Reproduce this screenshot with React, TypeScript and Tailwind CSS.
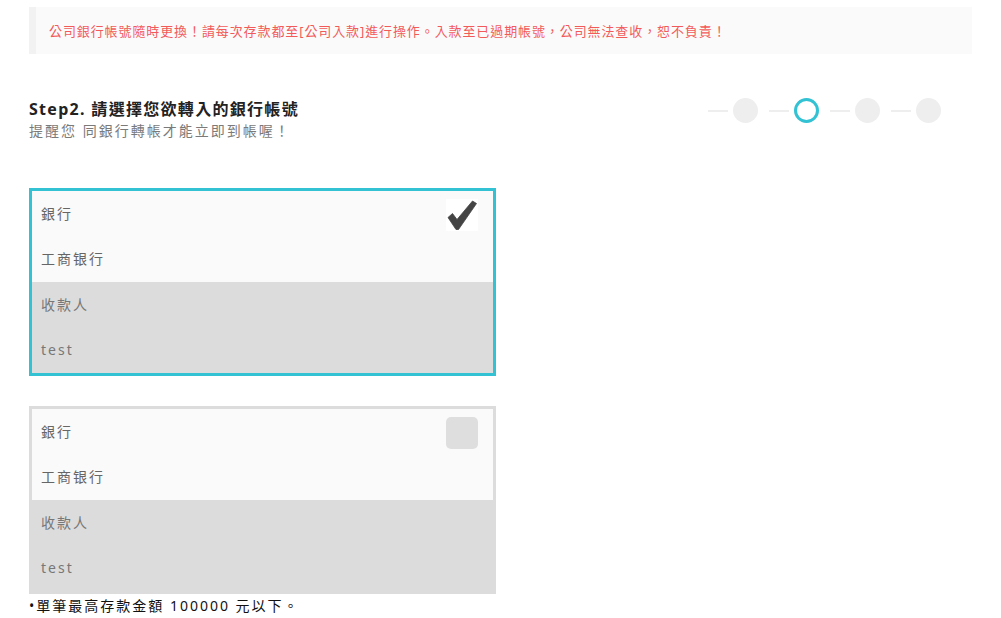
const font = { fontFamily: '"Noto Sans", "Noto Sans CJK TC", sans-serif' }

const accounts = [
  { bank: '工商银行', payee: 'test', selected: true },
  { bank: '工商银行', payee: 'test', selected: false },
]

function CheckIcon() {
  return (
    <svg width="32" height="32" viewBox="0 0 32 32" className="block">
      <path
        d="M2 18.5 L6.5 14.5 L11 20.5 L26.5 2 L30.5 4.5 L12.5 30.5 L10 30.5 Z"
        fill="#444444"
        stroke="#444444"
        strokeWidth="0.8"
        strokeLinejoin="round"
      />
    </svg>
  )
}

function Steps() {
  const steps = [false, true, false, false]
  return (
    <div className="flex items-center pr-[31px] -mt-[1px] -mb-[4px]">
      {steps.map((active, i) => (
        <div key={i} className="flex items-center ml-[11px] first:ml-0">
          <div className="w-5 h-[2px] bg-[#eeeeee]" />
          <div
            className={`ml-[5px] w-[25px] h-[25px] rounded-full ${
              active ? 'border-[3px] border-[#33c1d4] bg-white' : 'bg-[#eeeeee]'
            }`}
          />
        </div>
      ))}
    </div>
  )
}

function AccountCard({ bank, payee, selected }: { bank: string; payee: string; selected: boolean }) {
  return (
    <div
      className={`w-[467px] border-[3px] ${selected ? 'border-[#33c1d4]' : 'border-[#dcdcdc]'}`}
    >
      <div className="bg-[#fafafa]">
        <div className="h-[45.5px] flex items-center justify-between pl-[9px] pr-[15px]">
          <span className="text-[14px] leading-5 tracking-[2px] text-[#666666]">銀行</span>
          {selected ? (
            <div className="mt-[2px] w-8 h-8 bg-white">
              <CheckIcon />
            </div>
          ) : (
            <div className="mt-[2px] w-8 h-8 rounded-[5px] bg-[#dedede]" />
          )}
        </div>
        <div className="h-[45.5px] flex items-center pl-[9px]">
          <span className="text-[14px] leading-5 tracking-[2px] text-[#666666]">{bank}</span>
        </div>
      </div>
      <div className="bg-[#dcdcdc]">
        <div className="h-[45.5px] flex items-center pl-[9px]">
          <span className="text-[14px] leading-5 tracking-[2px] text-[#777777]">收款人</span>
        </div>
        <div className="h-[45.5px] flex items-center pl-[9px]">
          <span className="text-[14px] leading-5 tracking-[2px] text-[#777777]">{payee}</span>
        </div>
      </div>
    </div>
  )
}

export default function App() {
  return (
    <div className="min-h-screen bg-white pl-[29px] pr-[29px] pt-[7px]" style={font}>
      <div className="h-[47px] bg-[#fafafa] border-l-[7px] border-[#f2f2f2] flex items-center pl-[13px]">
        <p className="text-[13px] leading-5 tracking-[0.9px] text-[#f25a5a]">
          公司銀行帳號隨時更換！請每次存款都至[公司入款]進行操作。入款至已過期帳號，公司無法查收，恕不負責！
        </p>
      </div>

      <div className="mt-[45px] flex items-start justify-between">
        <h2 className="text-[16px] leading-5 font-bold tracking-[1.3px] text-[#222222]">Step2. 請選擇您欲轉入的銀行帳號</h2>
        <Steps />
      </div>
      <p className="mt-[2px] text-[14px] leading-5 tracking-[2px] text-[#7a7a7a]">提醒您 同銀行轉帳才能立即到帳喔！</p>

      <div className="mt-[47px] flex flex-col gap-[30px]">
        {accounts.map((a, i) => (
          <AccountCard key={i} {...a} />
        ))}
      </div>

      <p className="mt-[2px] text-[14px] leading-5 tracking-[2px] text-[#111111]">•單筆最高存款金額 100000 元以下。</p>
    </div>
  )
}
